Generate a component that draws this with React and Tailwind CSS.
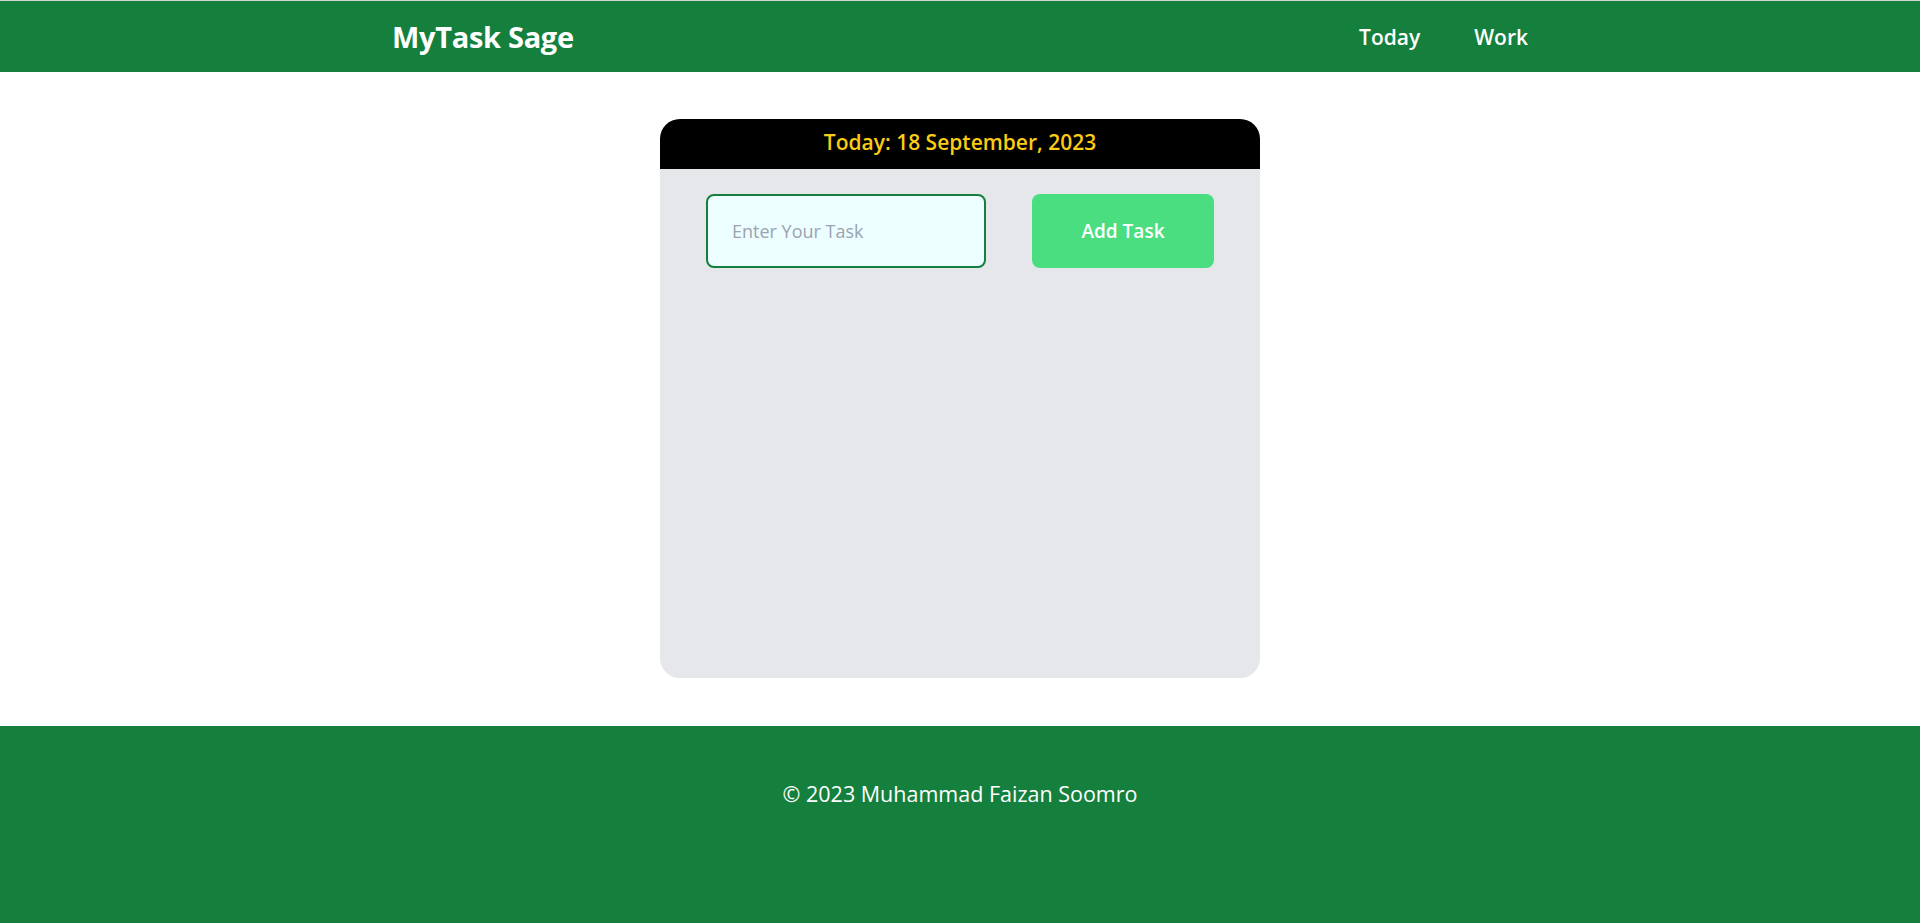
import { useState } from "react";

export default function App() {
  const [task, setTask] = useState("");

  return (
    <div className="min-h-screen flex flex-col bg-white font-['Open_Sans',sans-serif]">
      {/* Header */}
      <header className="bg-[#15803d] border-t border-[#d4d4d4] h-[72px]">
        <div className="max-w-[1136px] mx-auto h-full flex items-center justify-between">
          <h1 className="text-[29px] font-bold text-white tracking-[-0.3px]">MyTask Sage</h1>
          <nav className="flex items-center gap-[54px] pt-[3px] text-white text-[21px] font-semibold">
            <a href="#">Today</a>
            <a href="#">Work</a>
          </nav>
        </div>
      </header>

      {/* Card */}
      <main className="flex justify-center pt-[47px] pb-12">
        <div className="w-[600px] h-[559px] bg-[#e5e7eb] rounded-[20px] overflow-hidden">
          <div className="bg-black h-[50px] flex items-center justify-center">
            <h2 className="text-[21px] font-semibold text-[#facc15] -mt-[2px]">
              Today: 18 September, 2023
            </h2>
          </div>
          <div className="flex justify-evenly items-center mt-[25px]">
            <input
              className="w-[280px] h-[74px] bg-[#ecfeff] border-2 border-[#15803d] rounded-lg px-6 text-[18px] text-gray-700 placeholder:text-[#9ca3af] outline-none"
              placeholder="Enter Your Task"
              value={task}
              onChange={(e) => setTask(e.target.value)}
            />
            <button className="w-[182px] h-[74px] bg-[#4ade80] text-white text-[19px] font-semibold rounded-lg">
              Add Task
            </button>
          </div>
        </div>
      </main>

      {/* Footer */}
      <footer className="bg-[#15803d] flex-1 pt-[52px] pb-[100px] text-center text-white text-[21.5px]">
        © 2023 Muhammad Faizan Soomro
      </footer>
    </div>
  );
}
